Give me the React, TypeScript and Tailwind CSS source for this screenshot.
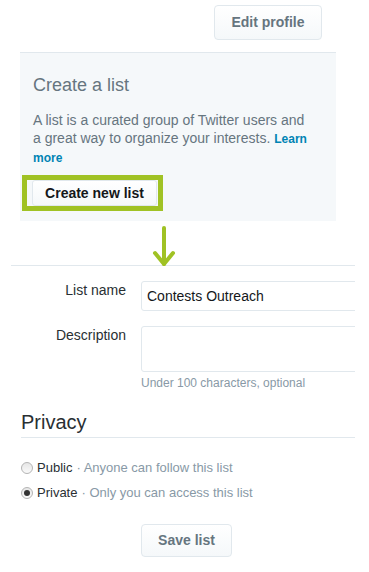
import React from 'react';

const font = { fontFamily: '"Liberation Sans", Arial, sans-serif' };

function Radio({ checked }: { checked?: boolean }) {
  return (
    <span className="w-[12px] h-[12px] rounded-full border border-[#b4b4b4] bg-gradient-to-b from-[#e6e6e6] to-[#fafafa] flex items-center justify-center shrink-0">
      {checked && <span className="w-[6px] h-[6px] rounded-full bg-[#333]" />}
    </span>
  );
}

export default function App() {
  return (
    <div className="w-[369px] h-[572px] bg-white overflow-hidden" style={font}>
      {/* Top bar */}
      <div className="flex justify-end pt-[5px] pr-[47px]">
        <button className="w-[108px] h-[35px] rounded-[4px] border border-[#e1e8ed] bg-gradient-to-b from-white to-[#f5f8fa] text-[14px] font-bold text-[#66757f]">
          Edit profile
        </button>
      </div>

      {/* Create a list panel */}
      <div className="ml-[20px] mt-[12px] w-[316px] h-[169px] border-t border-[#e1e8ed] bg-[#f5f8fa] pl-[13px] pr-[25px] pt-[21px]">
        <h2 className="text-[18px] leading-[22px] text-[#66757f]">Create a list</h2>
        <p className="mt-[15px] text-[14px] leading-[18px] text-[#66757f]">
          A list is a curated group of Twitter users and a great way to organize your interests.{' '}
          <a className="text-[12px] font-bold text-[#0084b4]">Learn more</a>
        </p>
        <div className="mt-[8px] ml-[-11px] w-[141px] h-[36px] border-[5px] border-[#a0c224] pl-[5px]">
          <button className="w-[125px] h-[26px] rounded-[3px] border border-[#e1e8ed] bg-gradient-to-b from-white to-[#f5f8fa] text-[14px] font-bold text-[#14171a]">
            Create new list
          </button>
        </div>
      </div>

      {/* Arrow */}
      <div className="h-[44px] pl-[152px] pt-[5px]">
        <svg width="24" height="42" viewBox="0 0 24 42" fill="none" stroke="#a0c224" strokeWidth="4" strokeLinecap="round" strokeLinejoin="round">
          <path d="M12 2 V38" />
          <path d="M3 27 L12 38 L21 27" />
        </svg>
      </div>

      {/* Form */}
      <div className="ml-[11px] w-[344px] border-t border-[#e1e8ed] overflow-hidden">
        <div className="flex mt-[15px]">
          <label className="w-[115px] shrink-0 text-right text-[14px] leading-[18px] text-[#292f33]">List name</label>
          <div className="ml-[15px] w-[260px] h-[30px] shrink-0 rounded-[3px] border border-[#e1e8ed] pl-[5px] flex items-center text-[14px] text-[#14171a]">
            Contests Outreach
          </div>
        </div>
        <div className="flex mt-[15px]">
          <label className="w-[115px] shrink-0 text-right text-[14px] leading-[18px] text-[#292f33]">Description</label>
          <div className="ml-[15px] shrink-0">
            <div className="w-[260px] h-[46px] rounded-[3px] border border-[#e1e8ed]" />
            <p className="mt-[4px] text-[12px] leading-[14px] text-[#8899a6]">Under 100 characters, optional</p>
          </div>
        </div>
      </div>

      {/* Privacy */}
      <div className="ml-[21px] w-[334px] mt-[20px]">
        <h2 className="text-[20px] leading-[24px] text-[#292f33] pb-[3px] border-b border-[#e1e8ed]">Privacy</h2>
        <div className="mt-[20px] flex items-center gap-[4px] h-[20px] text-[13px]">
          <Radio />
          <span className="text-[#292f33]">Public</span>
          <span className="text-[#8899a6]">· Anyone can follow this list</span>
        </div>
        <div className="mt-[5px] flex items-center gap-[4px] h-[20px] text-[13px]">
          <Radio checked />
          <span className="text-[#292f33]">Private</span>
          <span className="text-[#8899a6]">· Only you can access this list</span>
        </div>
      </div>

      <div className="ml-[141px] mt-[21px]">
        <button className="w-[91px] h-[33px] rounded-[4px] border border-[#e1e8ed] bg-gradient-to-b from-white to-[#f5f8fa] text-[14px] font-bold text-[#66757f]">
          Save list
        </button>
      </div>
    </div>
  );
}
